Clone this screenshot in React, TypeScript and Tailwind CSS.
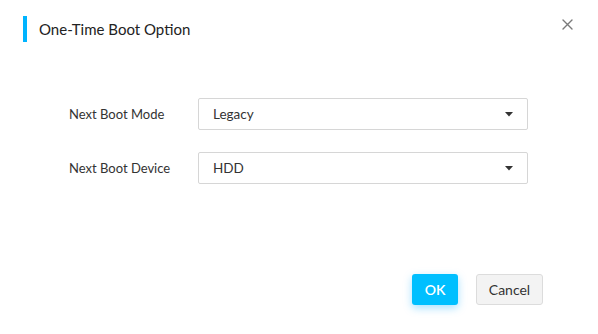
function Caret() {
  return (
    <svg width="8" height="5" viewBox="0 0 8 5" className="shrink-0">
      <path d="M0 0 L8 0 L4 4.5 Z" fill="#333" />
    </svg>
  );
}

function CloseIcon() {
  return (
    <svg width="11" height="11" viewBox="0 0 11 11">
      <path d="M1 1 L10 10 M10 1 L1 10" stroke="#7a7a7a" strokeWidth="1.4" strokeLinecap="round" />
    </svg>
  );
}

function SelectRow({ label, value }: { label: string; value: string }) {
  return (
    <div className="flex items-center">
      <div className="w-[129px] pt-[2px] text-[13px] text-[#333]">{label}</div>
      <div className="flex h-[32px] w-[330px] items-center justify-between rounded-[2px] border border-[#d6d6d6] bg-white pl-[14px] pr-[14px]">
        <span className="pt-[1px] text-[13.5px] text-[#333]">{value}</span>
        <Caret />
      </div>
    </div>
  );
}

export default function App() {
  return (
    <div className="flex h-[334px] w-[598px] flex-col bg-white" style={{ fontFamily: '"Source Sans Pro", Lato, "Noto Sans", sans-serif' }}>
      {/* Header */}
      <div className="flex items-start justify-between pt-[16px] pl-[23px] pr-[25px]">
        <div className="flex h-[26px] items-center">
          <div className="h-[26px] w-[4px] bg-[#00b4ff]" />
          <h2 className="ml-[12px] text-[15px] text-[#222]">One-Time Boot Option</h2>
        </div>
        <button className="mt-[3px] flex">
          <CloseIcon />
        </button>
      </div>

      {/* Form */}
      <div className="mt-[56px] flex flex-col gap-[22px] pl-[69px]">
        <SelectRow label="Next Boot Mode" value="Legacy" />
        <SelectRow label="Next Boot Device" value="HDD" />
      </div>

      {/* Footer */}
      <div className="mt-[90px] flex justify-end gap-[18px] pr-[55px]">
        <button className="h-[31px] w-[46px] rounded-[3px] bg-[#00bfff] text-[14px] font-semibold text-white shadow-[0_3px_8px_rgba(0,170,255,0.35)]">
          OK
        </button>
        <button className="h-[31px] w-[67px] rounded-[3px] border border-[#dcdcdc] bg-[#f3f3f3] text-[14px] text-[#333]">
          Cancel
        </button>
      </div>
    </div>
  );
}
